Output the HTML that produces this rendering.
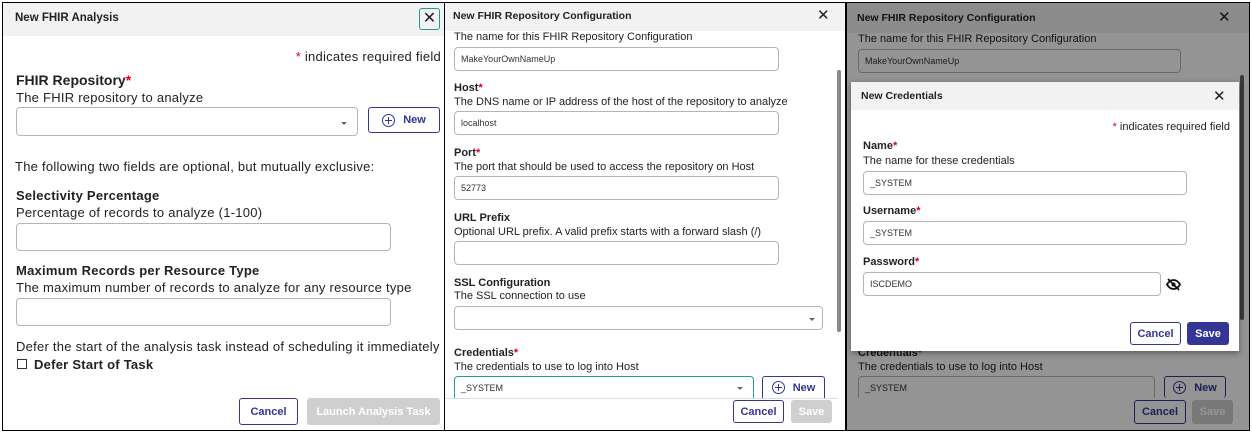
<!DOCTYPE html>
<html><head><meta charset="utf-8"><style>
*{box-sizing:border-box;margin:0;padding:0}
body{width:1252px;height:433px;position:relative;background:#fff;font-family:"Liberation Sans",sans-serif;color:#222;overflow:hidden}
.a{position:absolute;white-space:nowrap}
.b{font-weight:bold}
.r{color:#d0021b}
.in{position:absolute;border:1px solid #b5b5b5;border-radius:4px;background:#fff;font-size:9px;padding-left:6px;display:flex;align-items:center;color:#333}
.btn{position:absolute;border:1.5px solid #333695;border-radius:3px;color:#333695;font-weight:bold;font-size:11px;display:flex;align-items:center;justify-content:center;background:#fff}
.dis{position:absolute;background:#cfcfcf;color:#fff;font-weight:bold;font-size:11px;border-radius:3px;display:flex;align-items:center;justify-content:center}
.car{position:absolute;width:0;height:0;border-left:3px solid transparent;border-right:3px solid transparent;border-top:3px solid #666}
.pl{display:inline-block;width:13px;height:13px;border:1.3px solid #333695;border-radius:50%;position:relative;margin-right:8px;vertical-align:middle}
.pl:before{content:"";position:absolute;left:5px;top:2px;width:1.3px;height:7px;background:#333695}
.pl:after{content:"";position:absolute;left:2px;top:5px;width:7px;height:1.3px;background:#333695}
.f13{font-size:13px;letter-spacing:0.25px}.f11{font-size:11px}
</style></head><body>
<!-- panel 1 -->
<div class="a" style="left:2px;top:2px;width:443px;height:429px;border:1px solid #000"></div>
<div class="a" style="left:3px;top:3px;width:441px;height:33px;background:#f2f2f2"></div>
<div class="a b" style="left:15px;top:12px;font-size:11.5px">New FHIR Analysis</div>
<div class="a" style="left:419px;top:8px;width:21px;height:22px;border:1.5px solid #1f9c98;border-radius:3px;font-size:16px;text-align:center;line-height:19px">✕</div>
<div class="a f13" style="right:811px;top:49px"><span class="r">*</span> indicates required field</div>
<div class="a b" style="left:16px;top:72px;font-size:14px">FHIR Repository<span class="r">*</span></div>
<div class="a f13" style="left:16px;top:90px">The FHIR repository to analyze</div>
<div class="in" style="left:16px;top:107px;width:342px;height:29px"></div><div class="car" style="left:341px;top:122px"></div>
<div class="btn" style="left:368px;top:107px;width:72px;height:26px"><span class="pl"></span>New</div>
<div class="a f13" style="left:15px;top:159px">The following two fields are optional, but mutually exclusive:</div>
<div class="a b f13" style="left:16px;top:188px">Selectivity Percentage</div>
<div class="a f13" style="left:16px;top:205px">Percentage of records to analyze (1-100)</div>
<div class="in" style="left:16px;top:223px;width:375px;height:28px"></div>
<div class="a b f13" style="left:16px;top:263px">Maximum Records per Resource Type</div>
<div class="a f13" style="left:16px;top:280px">The maximum number of records to analyze for any resource type</div>
<div class="in" style="left:16px;top:298px;width:375px;height:28px"></div>
<div class="a f13" style="left:16px;top:339px">Defer the start of the analysis task instead of scheduling it immediately</div>
<div class="a" style="left:17px;top:359px;width:10px;height:10px;border:1px solid #333"></div>
<div class="a b f13" style="left:34px;top:357px">Defer Start of Task</div>
<div class="btn" style="left:239px;top:398px;width:59px;height:27px">Cancel</div>
<div class="dis" style="left:307px;top:398px;width:133px;height:27px">Launch Analysis Task</div>

<!-- panel 2 -->
<div class="a" style="left:445px;top:2px;width:401px;height:429px;border:1px solid #000;border-left:none"></div>
<div class="a" style="left:445px;top:3px;width:400px;height:28px;background:#f2f2f2"></div>
<div class="a b" style="left:453px;top:10px;font-size:10.5px">New FHIR Repository Configuration</div>
<div class="a" style="left:817px;top:6px;font-size:15px">✕</div>
<div class="a f11" style="left:454px;top:31px">The name for this FHIR Repository Configuration</div>
<div class="in" style="left:454px;top:47px;width:325px;height:24px">MakeYourOwnNameUp</div>
<div class="a b f11" style="left:454px;top:82px">Host<span class="r">*</span></div>
<div class="a f11" style="left:454px;top:96px">The DNS name or IP address of the host of the repository to analyze</div>
<div class="in" style="left:454px;top:111px;width:325px;height:24px">localhost</div>
<div class="a b f11" style="left:454px;top:147px">Port<span class="r">*</span></div>
<div class="a f11" style="left:454px;top:161px">The port that should be used to access the repository on Host</div>
<div class="in" style="left:454px;top:176px;width:325px;height:24px">52773</div>
<div class="a b f11" style="left:454px;top:212px">URL Prefix</div>
<div class="a f11" style="left:454px;top:226px">Optional URL prefix. A valid prefix starts with a forward slash (/)</div>
<div class="in" style="left:454px;top:241px;width:325px;height:24px"></div>
<div class="a b f11" style="left:454px;top:277px">SSL Configuration</div>
<div class="a f11" style="left:454px;top:290px">The SSL connection to use</div>
<div class="in" style="left:454px;top:306px;width:369px;height:24px"></div><div class="car" style="left:809px;top:318px"></div>
<div class="a b f11" style="left:454px;top:347px">Credentials<span class="r">*</span></div>
<div class="a f11" style="left:454px;top:361px">The credentials to use to log into Host</div>
<div class="in" style="left:454px;top:376px;width:300px;height:22px;border:1.5px solid #1f9c98;border-bottom:none;border-radius:4px 4px 0 0">_SYSTEM</div><div class="car" style="left:737px;top:387px"></div>
<div class="btn" style="left:762px;top:376px;width:63px;height:22px;border-bottom:none;border-radius:3px 3px 0 0"><span class="pl"></span>New</div>
<div class="a" style="left:837px;top:70px;width:4px;height:262px;background:#888;border-radius:2px"></div>
<div class="a" style="left:446px;top:398px;width:392px;height:1px;background:#ddd"></div>
<div class="btn" style="left:733px;top:400px;width:51px;height:23px">Cancel</div>
<div class="dis" style="left:791px;top:400px;width:41px;height:23px">Save</div>

<!-- panel 3 -->
<div class="a" style="left:846px;top:2px;width:404px;height:429px;border:1px solid #000;background:#fff"></div>
<div class="a" style="left:847px;top:3px;width:402px;height:30px;background:#f2f2f2"></div>
<div class="a b" style="left:857px;top:12px;font-size:10.5px">New FHIR Repository Configuration</div>
<div class="a" style="left:1218px;top:8px;font-size:15px">✕</div>
<div class="a f11" style="left:858px;top:33px">The name for this FHIR Repository Configuration</div>
<div class="in" style="left:858px;top:49px;width:323px;height:24px">MakeYourOwnNameUp</div>
<div class="a b f11" style="left:858px;top:347px">Credentials<span class="r">*</span></div>
<div class="a f11" style="left:858px;top:361px">The credentials to use to log into Host</div>
<div class="in" style="left:858px;top:376px;width:297px;height:22px;border-bottom:none;border-radius:4px 4px 0 0">_SYSTEM</div>
<div class="btn" style="left:1164px;top:376px;width:62px;height:22px;border-bottom:none"><span class="pl"></span>New</div>
<div class="a" style="left:1240px;top:75px;width:4px;height:245px;background:#666;border-radius:2px"></div>
<div class="btn" style="left:1134px;top:400px;width:52px;height:24px">Cancel</div>
<div class="dis" style="left:1192px;top:400px;width:41px;height:24px">Save</div>
<div class="a" style="left:847px;top:3px;width:402px;height:427px;background:rgba(0,0,0,0.42)"></div>
<!-- modal -->
<div class="a" style="left:851px;top:82px;width:388px;height:269px;background:#fff;box-shadow:0 2px 6px rgba(0,0,0,.4)"></div>
<div class="a" style="left:851px;top:82px;width:388px;height:28px;background:#f2f2f2"></div>
<div class="a b" style="left:861px;top:90px;font-size:10.5px">New Credentials</div>
<div class="a" style="left:1213px;top:87px;font-size:15px">✕</div>
<div class="a f11" style="right:22px;top:121px"><span class="r">*</span> indicates required field</div>
<div class="a b f11" style="left:863px;top:140px">Name<span class="r">*</span></div>
<div class="a f11" style="left:863px;top:155px">The name for these credentials</div>
<div class="in" style="left:863px;top:171px;width:324px;height:24px">_SYSTEM</div>
<div class="a b f11" style="left:863px;top:205px">Username<span class="r">*</span></div>
<div class="in" style="left:863px;top:221px;width:324px;height:24px">_SYSTEM</div>
<div class="a b f11" style="left:863px;top:256px">Password<span class="r">*</span></div>
<div class="in" style="left:863px;top:272px;width:298px;height:24px">ISCDEMO</div>
<svg class="a" style="left:1166px;top:278px" width="15" height="13" viewBox="0 0 15 13"><path d="M1 6.5C3 3 5 2 7.5 2S12 3 14 6.5C12 10 10 11 7.5 11S3 10 1 6.5Z" fill="none" stroke="#111" stroke-width="1.8"/><circle cx="7.5" cy="6.5" r="2" fill="#111"/><path d="M2 1L13 12" stroke="#111" stroke-width="1.8"/></svg>
<div class="btn" style="left:1130px;top:322px;width:51px;height:23px">Cancel</div>
<div class="a b" style="left:1187px;top:322px;width:42px;height:23px;background:#333695;color:#fff;font-size:11px;border-radius:3px;display:flex;align-items:center;justify-content:center">Save</div>
</body></html>
